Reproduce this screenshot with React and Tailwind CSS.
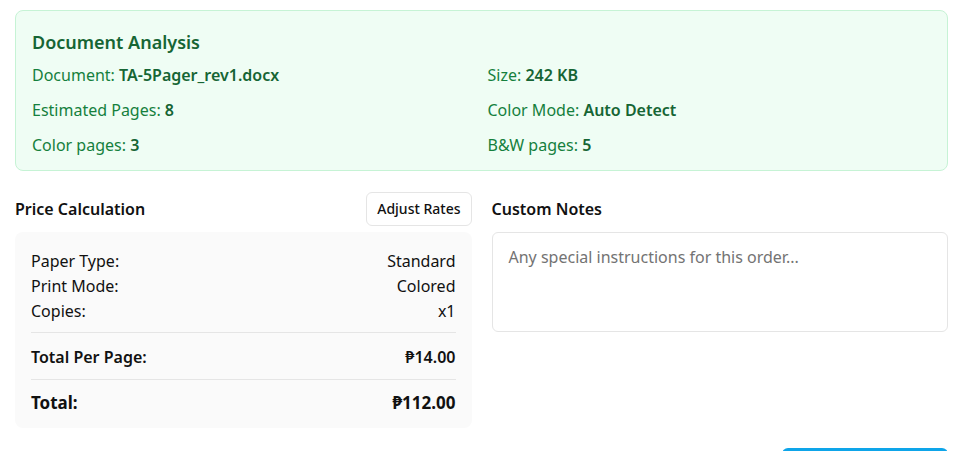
import React from 'react';

const analysis = [
  ['Document', 'TA-5Pager_rev1.docx'],
  ['Size', '242 KB'],
  ['Estimated Pages', '8'],
  ['Color Mode', 'Auto Detect'],
  ['Color pages', '3'],
  ['B&W pages', '5'],
];

const details = [
  ['Paper Type:', 'Standard'],
  ['Print Mode:', 'Colored'],
  ['Copies:', 'x1'],
];

export default function App() {
  return (
    <div className="h-screen overflow-hidden bg-white pl-[15px] pr-[13px] pt-[10px] font-['Segoe_UI','Noto_Sans',sans-serif] text-[#111]">
      {/* Document analysis summary */}
      <div className="rounded-lg border border-[#c6f3d5] bg-[#effdf4] px-4 pt-[19px] pb-[13px]">
        <h3 className="mb-[9px] text-lg font-semibold leading-[24px] text-[#166534]">Document Analysis</h3>
        <div className="grid grid-cols-2 gap-x-3 gap-y-[11px] text-base leading-6 text-[#15803d]">
          {analysis.map(([label, value]) => (
            <p key={label}>
              {label}: <span className="font-semibold text-[#166534]">{value}</span>
            </p>
          ))}
        </div>
      </div>

      <div className="mt-[21px] grid grid-cols-2 gap-5">
        {/* Price calculation */}
        <div>
          <div className="mb-[6px] flex items-center justify-between">
            <h4 className="text-base font-semibold">Price Calculation</h4>
            <button className="rounded-md border border-[#e5e5e5] bg-white px-[10px] py-[6px] text-sm font-medium leading-5">
              Adjust Rates
            </button>
          </div>
          <div className="rounded-lg bg-[#fafafa] px-4 pt-[17px] pb-[13px] text-base">
            <div className="flex flex-col leading-[25px]">
              {details.map(([label, value]) => (
                <div key={label} className="flex justify-between">
                  <span>{label}</span>
                  <span>{value}</span>
                </div>
              ))}
            </div>
            <div className="mt-[8px] flex justify-between border-t border-[#e5e5e5] pt-[12px] pb-[10px] font-semibold leading-6">
              <span>Total Per Page:</span>
              <span>₱14.00</span>
            </div>
            <div className="flex justify-between border-t border-[#e5e5e5] pt-[11px] text-[17px] font-bold leading-6">
              <span>Total:</span>
              <span>₱112.00</span>
            </div>
          </div>
        </div>

        {/* Custom notes */}
        <div>
          <h4 className="mb-[11px] mt-[5px] text-base font-semibold leading-6">Custom Notes</h4>
          <textarea
            rows={3}
            placeholder="Any special instructions for this order..."
            className="block h-[100px] w-full resize-none rounded-md border border-[#e5e5e5] px-4 py-3 text-base leading-6 placeholder:text-[#737373] focus:outline-none"
          />
        </div>
      </div>

      <div className="mt-[20px] flex justify-end">
        <button className="h-10 w-[166px] rounded-md bg-[#0ea5e9] text-sm font-medium text-white">
          Place Order
        </button>
      </div>
    </div>
  );
}
